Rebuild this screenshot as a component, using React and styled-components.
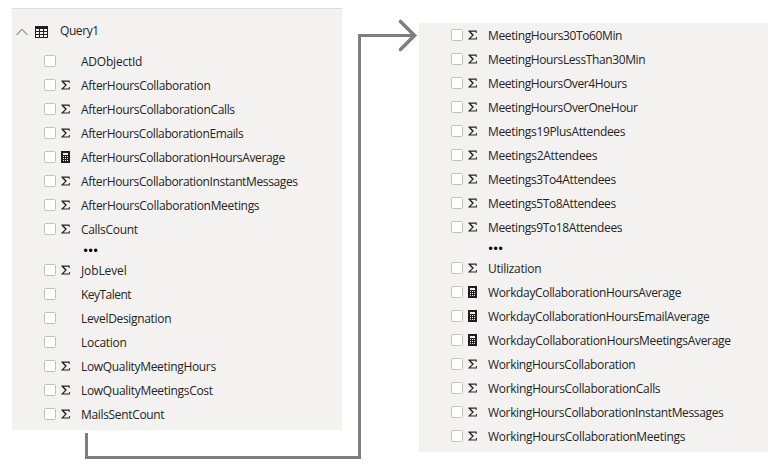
import React from "react";
import styled, { createGlobalStyle } from "styled-components";

const GlobalStyle = createGlobalStyle`
  *, *::before, *::after { box-sizing: border-box; }
  body {
    margin: 0;
    background: #fff;
    color: #252423;
    font-family: "Open Sans", "Noto Sans", sans-serif;
    font-size: 12px;
  }
`;

const Page = styled.main`
  position: relative;
  display: flex;
  align-items: flex-start;
  gap: 77px;
  width: 781px;
  height: 474px;
  padding: 8px 0 0 12px;
  overflow: hidden;
`;

const Panel = styled.section`
  flex: none;
  width: ${(p) => p.$width}px;
  margin-top: ${(p) => p.$offset || 0}px;
  padding-bottom: 4px;
  background: #f3f2f1;
  border-top: ${(p) => (p.$edge ? "1px solid #dcdddd" : "none")};
`;

const TableHeader = styled.header`
  display: flex;
  align-items: center;
  height: 40px;
  padding: 0 0 0 4px;
`;

const Chevron = styled.svg`
  width: 12px;
  height: 8px;
  margin-top: 6px;
`;

const TableGlyph = styled.svg`
  width: 13px;
  height: 12px;
  margin: 6px 12px 0 7px;
`;

const FieldRow = styled.label`
  display: flex;
  align-items: center;
  height: 24px;
  padding-left: 32px;
`;

const Checkbox = styled.input.attrs({ type: "checkbox" })`
  appearance: none;
  flex: none;
  width: 12px;
  height: 12px;
  margin: 0;
  background: #fff;
  border: 1px solid #c3c1c0;
  border-radius: 1.5px;
`;

const IconSlot = styled.span`
  display: flex;
  align-items: center;
  width: 9px;
  height: 12px;
  margin: 0 11px 0 5px;
`;

const Label = styled.span`
  height: 18px;
  margin-top: 2px;
  line-height: 18px;
  white-space: nowrap;
  letter-spacing: ${(p) => p.$tracking - 0.025}px;
`;

const TableName = styled(Label)`
  margin-top: 4px;
`;

const Ellipsis = styled.div`
  height: 17px;
  padding-left: ${(p) => p.$indent}px;
  color: #000;
  font: 12px/20px "Liberation Sans", Arial, sans-serif;
  letter-spacing: 0.8px;
`;

const ArrowLayer = styled.svg`
  position: absolute;
  left: 80px;
  top: 15px;
  width: 340px;
  height: 450px;
  pointer-events: none;
`;

function SumIcon() {
  return (
    <svg width="10" height="10" viewBox="0 0 10 10" overflow="visible">
      <path
        d="M0.3 0.6H8.7V3H7.9L7.5 1.7H2.8L5.9 5.1L2.5 8.4H7.7L8.2 7H9L8.8 9.6H0.2V8.9L4.1 5.2L0.3 1.3Z"
        fill="#252423"
      />
    </svg>
  );
}

function CalculatorIcon() {
  return (
    <svg width="9" height="12" viewBox="0 0 9 12" shapeRendering="crispEdges">
      <rect width="9" height="12" fill="#201f1e" />
      <rect x="2" y="2" width="5" height="2" fill="#f3f2f1" />
      {[5, 7, 9].map((y) =>
        [2, 4, 6].map((x) => (
          <rect key={`${x}-${y}`} x={x} y={y} width="1" height="1" fill="#f3f2f1" />
        ))
      )}
    </svg>
  );
}

const icons = { sum: <SumIcon />, calc: <CalculatorIcon />, none: null };

const leftTop = [
  ["ADObjectId", "none", -0.2],
  ["AfterHoursCollaboration", "sum", -0.31],
  ["AfterHoursCollaborationCalls", "sum", -0.31],
  ["AfterHoursCollaborationEmails", "sum", -0.355],
  ["AfterHoursCollaborationHoursAverage", "calc", -0.33],
  ["AfterHoursCollaborationInstantMessages", "sum", -0.345],
  ["AfterHoursCollaborationMeetings", "sum", -0.3],
  ["CallsCount", "sum", -0.28],
];

const leftBottom = [
  ["JobLevel", "sum", -0.1],
  ["KeyTalent", "none", -0.5],
  ["LevelDesignation", "none", -0.3],
  ["Location", "none", -0.25],
  ["LowQualityMeetingHours", "sum", -0.3],
  ["LowQualityMeetingsCost", "sum", -0.28],
  ["MailsSentCount", "sum", -0.31],
];

const rightTop = [
  ["MeetingHours30To60Min", "sum", -0.35],
  ["MeetingHoursLessThan30Min", "sum", -0.36],
  ["MeetingHoursOver4Hours", "sum", -0.36],
  ["MeetingHoursOverOneHour", "sum", -0.355],
  ["Meetings19PlusAttendees", "sum", -0.32],
  ["Meetings2Attendees", "sum", -0.29],
  ["Meetings3To4Attendees", "sum", -0.34],
  ["Meetings5To8Attendees", "sum", -0.34],
  ["Meetings9To18Attendees", "sum", -0.35],
];

const rightBottom = [
  ["Utilization", "sum", -0.25],
  ["WorkdayCollaborationHoursAverage", "calc", -0.325],
  ["WorkdayCollaborationHoursEmailAverage", "calc", -0.335],
  ["WorkdayCollaborationHoursMeetingsAverage", "calc", -0.295],
  ["WorkingHoursCollaboration", "sum", -0.32],
  ["WorkingHoursCollaborationCalls", "sum", -0.3],
  ["WorkingHoursCollaborationInstantMessages", "sum", -0.33],
  ["WorkingHoursCollaborationMeetings", "sum", -0.28],
];

function FieldList({ fields }) {
  return fields.map(([name, icon, tracking]) => (
    <FieldRow key={name}>
      <Checkbox />
      <IconSlot>{icons[icon]}</IconSlot>
      <Label $tracking={tracking}>{name}</Label>
    </FieldRow>
  ));
}

export default function App() {
  return (
    <>
      <GlobalStyle />
      <Page>
        <Panel $width={330} $edge>
          <TableHeader>
            <Chevron viewBox="0 0 12 8">
              <path d="M0.5 7L6 1.3L11.5 7" fill="none" stroke="#605e5c" strokeWidth="1" />
            </Chevron>
            <TableGlyph viewBox="0 0 13 12" shapeRendering="crispEdges">
              <rect width="13" height="12" fill="#201f1e" />
              {[3, 6, 9].map((y) =>
                [1, 5, 9].map((x) => (
                  <rect key={`${x}-${y}`} x={x} y={y} width="3" height="2" fill="#f3f2f1" />
                ))
              )}
            </TableGlyph>
            <TableName $tracking={-0.4}>Query1</TableName>
          </TableHeader>
          <FieldList fields={leftTop} />
          <Ellipsis $indent={71.5}>•••</Ellipsis>
          <FieldList fields={leftBottom} />
        </Panel>
        <Panel $width={349} $offset={15}>
          <FieldList fields={rightTop} />
          <Ellipsis $indent={69.5}>•••</Ellipsis>
          <FieldList fields={rightBottom} />
        </Panel>
        <ArrowLayer viewBox="80 15 340 450">
          <path
            d="M86.5 433V457.5H359.5V35.5H415"
            fill="none"
            stroke="#7f7f7f"
            strokeWidth="3"
          />
          <path
            d="M400.5 21.5L414.5 35.5L400.5 49.5"
            fill="none"
            stroke="#7f7f7f"
            strokeWidth="3.6"
            strokeLinecap="round"
          />
        </ArrowLayer>
      </Page>
    </>
  );
}
